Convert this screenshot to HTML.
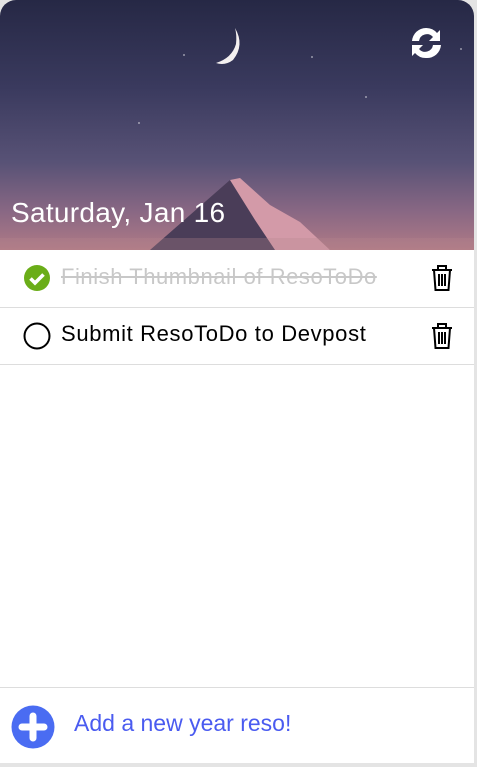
<!DOCTYPE html>
<html><head><style>
html,body{margin:0;padding:0;width:477px;height:767px;background:#e4e4e4;overflow:hidden;font-family:"Liberation Sans",sans-serif;}
.card{position:absolute;left:0;top:0;width:474px;height:763px;background:#fff;border-radius:16px 16px 0 0;overflow:hidden;}
.hdr{position:absolute;left:0;top:0;width:474px;height:250px;background:linear-gradient(180deg,#262845 0%,#3a3a5e 35%,#585276 65%,#8a6884 85%,#b07a86 100%);overflow:hidden}
.date{position:absolute;left:11px;top:197px;color:#fff;font-size:28px;letter-spacing:0.3px}
.row{position:absolute;left:0;width:474px;height:57px;border-bottom:1px solid #ddd}
.txt{position:absolute;left:61px;top:14px;font-size:22px;letter-spacing:0.5px}
.foot{position:absolute;left:0;top:687px;width:474px;height:76px;border-top:1px solid #ddd}
</style></head><body>
<div class="card">
<div class="hdr">
<svg width="474" height="250" style="position:absolute;left:0;top:0">
<path d="M235 28 Q245 45 233 60 Q225 66 216 63 Q232 58 236 44 Q237 35 235 28Z" fill="#f4f0f0"/>
<polygon points="150,250 230,180 260,205 300,230 330,250" fill="#4a3d58"/>
<polygon points="230,180 240,178 270,205 300,222 330,250 275,250 255,220" fill="#d39aa8"/>
<rect x="0" y="238" width="474" height="12" fill="#b58890" opacity="0.3"/>
<g fill="#fff" opacity=".5"><circle cx="184" cy="55" r="1"/><circle cx="312" cy="57" r="1"/><circle cx="366" cy="97" r="1"/><circle cx="461" cy="49" r="1"/><circle cx="139" cy="123" r="1"/></g>
<g transform="translate(410,26)" fill="#fff">
<path d="M16 2a14 14 0 0 1 11 5l3-3v11H19l4-4a8 8 0 0 0-14 4H2A14 14 0 0 1 16 2z"/>
<path d="M16 32a14 14 0 0 1-11-5l-3 3V19h11l-4 4a8 8 0 0 0 14-4h8A14 14 0 0 1 16 32z"/>
</g>
</svg>
<div class="date">Saturday, Jan 16</div>
</div>
<div class="row" style="top:250px">
<svg style="position:absolute;left:23px;top:14px" width="28" height="28"><circle cx="14" cy="14" r="13" fill="#6aad18"/><path d="M7.5 14.5l4.5 4.5 8.5-8.5" stroke="#fff" stroke-width="3.6" fill="none"/></svg>
<div class="txt" style="color:#c8c8c8;text-decoration:line-through;letter-spacing:0.55px">Finish Thumbnail of ResoToDo</div>
<svg style="position:absolute;left:430px;top:14px" width="24" height="28" fill="none" stroke="#000" stroke-width="2"><path d="M2 6h20M8 6V2h8v4M4 6l1.5 20h13L20 6M9 10v12M12 10v12M15 10v12"/></svg>
</div>
<div class="row" style="top:307px">
<svg style="position:absolute;left:23px;top:15px" width="28" height="28"><circle cx="14" cy="14" r="12.5" fill="none" stroke="#000" stroke-width="2"/></svg>
<div class="txt" style="color:#000;letter-spacing:0.65px">Submit ResoToDo to Devpost</div>
<svg style="position:absolute;left:430px;top:15px" width="24" height="28" fill="none" stroke="#000" stroke-width="2"><path d="M2 6h20M8 6V2h8v4M4 6l1.5 20h13L20 6M9 10v12M12 10v12M15 10v12"/></svg>
</div>
<div class="foot">
<svg style="position:absolute;left:11px;top:17px" width="44" height="44"><circle cx="22" cy="22" r="21.5" fill="#4a6cf2"/><path d="M22 11v22M11 22h22" stroke="#fff" stroke-width="7" stroke-linecap="round"/></svg>
<div style="position:absolute;left:74px;top:22px;font-size:23px;color:#4a5bf0;letter-spacing:0px">Add a new year reso!</div>
</div>
</div>
</body></html>
